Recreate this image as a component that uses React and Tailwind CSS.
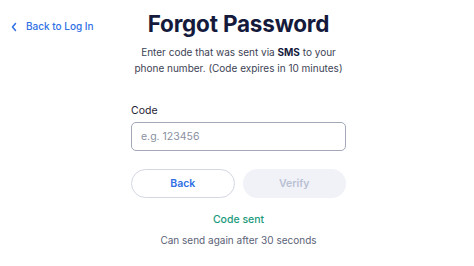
import React from 'react';

const App = () => {
  return (
    <div className="w-[474px] h-[266px] bg-white grid grid-cols-[131px_215px_1fr] font-['Inter',sans-serif]">
      <div className="pt-[19px] pl-[10px]">
        <button className="flex items-center gap-[8px] text-[10px] font-medium text-[#2f6fe4]">
          <svg width="8" height="10" viewBox="0 0 8 10" fill="none">
            <path d="M5.5 1.5L2.5 5l3 3.5" stroke="#2f6fe4" strokeWidth="1.5" strokeLinecap="round" strokeLinejoin="round" />
          </svg>
          <span>Back to Log In</span>
        </button>
      </div>

      <div className="flex flex-col items-center pt-[10px]">
        <h1 className="whitespace-nowrap text-[22.5px] leading-[28px] font-bold text-[#151a3c] tracking-[-0.2px]">
          Forgot Password
        </h1>
        <p className="mt-[6px] whitespace-nowrap text-center text-[10px] leading-[16px] text-[#3d4356]">
          Enter code that was sent via <span className="font-bold text-[#151a3c]">SMS</span> to your
          <br />
          phone number. (Code expires in 10 minutes)
        </p>

        <div className="mt-[27px] w-full">
          <label className="block text-[10.5px] leading-[16px] font-normal text-[#1f2333]">Code</label>
          <input
            type="text"
            placeholder="e.g. 123456"
            className="mt-[3px] w-full h-[29px] rounded-[5px] border border-[#a3a8b8] px-[9px] text-[10.5px] text-[#1f2333] placeholder:text-[#8a90a2] outline-none"
          />
        </div>

        <div className="mt-[18px] w-full grid grid-cols-2 gap-[8px]">
          <button className="h-[29px] rounded-full border border-[#d3d7e2] bg-white text-[10.5px] font-semibold text-[#2f6fe4]">
            Back
          </button>
          <button className="h-[29px] rounded-full bg-[#f0f2f8] text-[10.5px] font-semibold text-[#b9c0d2]" disabled>
            Verify
          </button>
        </div>

        <p className="mt-[14px] text-[10.5px] leading-[16px] font-medium text-[#1b9a7c]">Code sent</p>
        <p className="mt-[4px] whitespace-nowrap text-[10px] leading-[16px] text-[#5b6276]">Can send again after 30 seconds</p>
      </div>

      <div />
    </div>
  );
};

export default App;
